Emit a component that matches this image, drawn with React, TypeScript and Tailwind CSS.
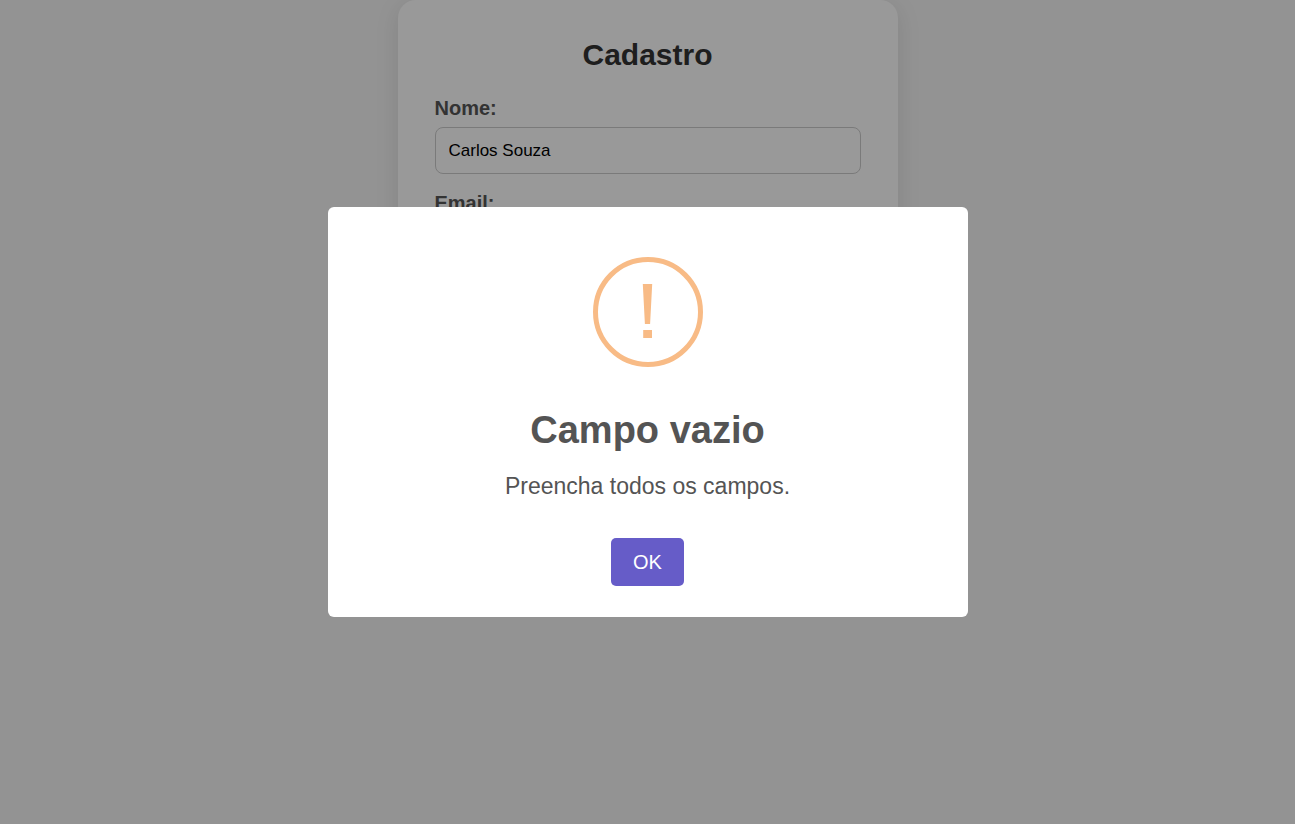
import { useState } from "react";

type FieldProps = { id: string; label: string; type: string; initial?: string };

function Field({ id, label, type, initial = "" }: FieldProps) {
  return (
    <div className="flex flex-col gap-[7px]">
      <label htmlFor={id} className="text-xl leading-6 font-bold text-[#555]">
        {label}
      </label>
      <input
        id={id}
        type={type}
        defaultValue={initial}
        className="h-[47px] w-full rounded-lg border border-[#ccc] bg-white px-[13px] text-[17px] text-black outline-none"
      />
    </div>
  );
}

function WarningIcon() {
  return (
    <svg aria-hidden="true" viewBox="0 0 110 110" className="size-[110px] text-[#f8bb86]">
      <circle cx="55" cy="55" r="52.5" fill="none" stroke="currentColor" strokeWidth="5" />
      <path d="M49.8 27h9.4l-2.1 40h-5.2zM50.2 73h8.8v8h-8.8z" fill="currentColor" />
    </svg>
  );
}

export default function App() {
  const [open, setOpen] = useState(true);

  return (
    <div className="min-h-screen bg-[#f5f5f5] font-['Liberation_Sans',Arial,sans-serif]">
      <main className="mx-auto w-full max-w-[500px] rounded-[18px] bg-white px-[37px] pt-[37px] pb-9 shadow-[0_5px_25px_rgba(0,0,0,0.1)]">
        <h1 className="mb-[23px] text-center text-3xl font-bold text-[#333]">Cadastro</h1>
        <form className="flex flex-col gap-[17px]" onSubmit={(e) => e.preventDefault()}>
          <Field id="nome" label="Nome:" type="text" initial="Carlos Souza" />
          <Field id="email" label="Email:" type="email" />
          <Field id="senha" label="Senha:" type="password" />
        </form>
      </main>

      {open && (
        <div className="fixed inset-0 flex items-center justify-center bg-black/40 p-3">
          <div
            role="dialog"
            aria-modal="true"
            aria-labelledby="dialog-title"
            aria-describedby="dialog-text"
            className="flex w-full max-w-[640px] flex-col items-center rounded-md bg-white pt-[50px] pb-[31px] text-[#545454]"
          >
            <WarningIcon />
            <h2 id="dialog-title" className="mt-[41px] text-[38px] leading-[44px] font-bold">
              Campo vazio
            </h2>
            <p id="dialog-text" className="mt-[19px] text-[23px] leading-[30px]">
              Preencha todos os campos.
            </p>
            <button
              type="button"
              onClick={() => setOpen(false)}
              className="mt-[37px] h-12 rounded-[5px] bg-[#665cc8] px-[22px] text-xl text-white"
            >
              OK
            </button>
          </div>
        </div>
      )}
    </div>
  );
}
